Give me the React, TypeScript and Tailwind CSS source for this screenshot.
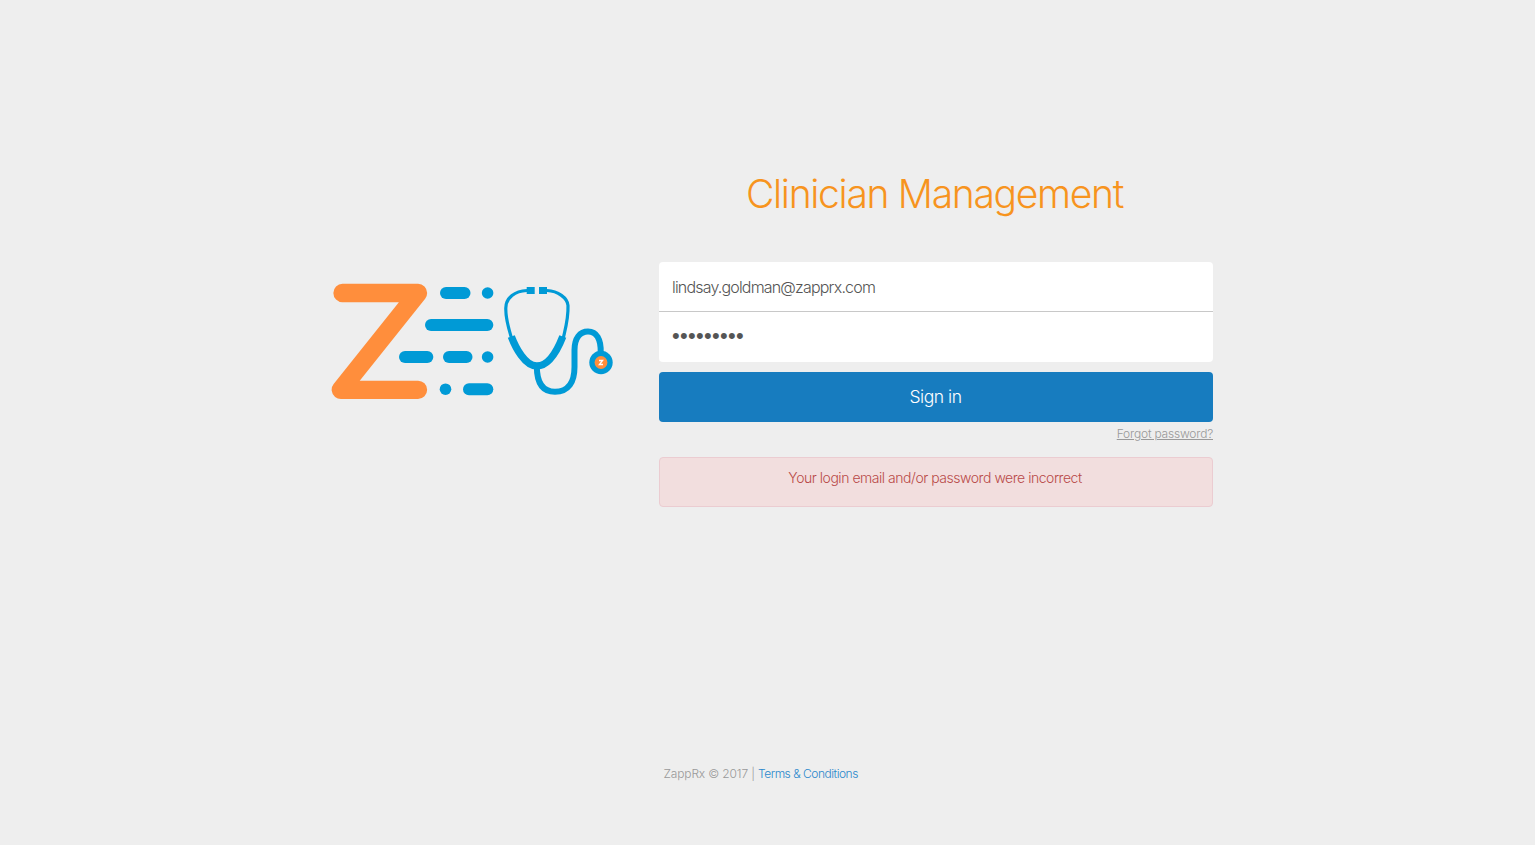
function Logo() {
  return (
    <svg className="block h-[120px] w-[284px]" viewBox="330 282 284 120" fill="none" role="img" aria-label="ZappRx">
      <path d="M342.5 293H418L340.8 389.8H418" stroke="#ff8e3c" strokeWidth="18.3" strokeLinecap="round" strokeLinejoin="round" />
      <g fill="#009ad6">
        <rect x="440" y="287" width="30.5" height="12" rx="6" />
        <circle cx="487.6" cy="293" r="5.8" />
        <rect x="425" y="319" width="68.3" height="12" rx="6" />
        <rect x="399" y="351" width="34.3" height="12" rx="6" />
        <rect x="443" y="351" width="29.5" height="12" rx="6" />
        <circle cx="487.6" cy="357" r="5.8" />
        <circle cx="445.5" cy="389.2" r="5.8" />
        <rect x="463" y="383.2" width="30.3" height="12" rx="6" />
        <rect x="526.7" y="287" width="8" height="7" />
        <rect x="539" y="287" width="8" height="7" />
      </g>
      <g stroke="#009ad6">
        <path d="M527 290.5C515 291 506 297.5 505.8 308C505.5 319 508.5 328 511.5 338" strokeWidth="3.2" />
        <path d="M547 290.5C558 291 567.5 298 568 305.5C568.5 318 565.8 327 563.3 338" strokeWidth="3.2" />
        <path d="M511.3 336.5C515.5 347.5 525 366 536.8 366C549 366 557.5 350 562.8 336.5" strokeWidth="7.4" />
        <path d="M536.8 366C536.8 382 542 391.8 555 391.8C568.5 391.8 574.5 382 574.5 367V350C574.5 338 580 331.5 588 331.5C596.5 331.5 601.2 339 600.7 353" strokeWidth="6" />
      </g>
      <circle cx="601" cy="362.5" r="11.7" fill="#009ad6" />
      <circle cx="601" cy="362.5" r="6.4" fill="#ff8e3c" />
      <path d="M599 360.5H602.6L599.4 364.5H603" stroke="#fff" strokeWidth="1.3" />
    </svg>
  );
}

export default function App() {
  return (
    <main className="flex h-[845px] justify-center overflow-hidden bg-[#eeeeee] font-['Inter',sans-serif] font-light">
      <div className="flex w-[1213px] pl-[169px]">
        <div className="w-[329px] shrink-0 pt-[282px]">
          <Logo />
        </div>
        <div className="flex w-[554px] shrink-0 flex-col">
          <h1 className="mt-[164px] h-[98px] whitespace-nowrap pr-[3px] text-center text-[39px] font-light leading-[60px] tracking-[-1.3px] text-[#f7941e]">
            Clinician Management
          </h1>
          <form className="flex flex-col" onSubmit={(e) => e.preventDefault()}>
            <div className="flex h-[100px] flex-col overflow-hidden rounded-[4px] bg-white">
              <input
                type="email"
                aria-label="Email"
                defaultValue="lindsay.goldman@zapprx.com"
                className="h-[50px] border-b border-[#c8c8c8] px-[13px] text-[16px] tracking-[-0.82px] text-[#555555] outline-none"
              />
              <input
                type="password"
                aria-label="Password"
                defaultValue="password1"
                className="h-[50px] px-[13px] pb-[2px] font-['Liberation_Sans',sans-serif] text-[22px] tracking-[0.3px] text-[#555555] outline-none"
              />
            </div>
            <button type="submit" className="mt-[10px] h-[50px] rounded-[4px] bg-[#177cbf] pr-[1px] text-[17.5px] tracking-[-0.45px] text-white">
              Sign in
            </button>
            <a href="#forgot" className="mt-[4px] h-[16px] self-end text-[12px] leading-[16px] tracking-[-0.2px] text-[#999999] underline">
              Forgot password?
            </a>
          </form>
          <div role="alert" className="mt-[15px] h-[50px] rounded-[4px] border border-[#ebccd1] bg-[#f2dede] pr-[2px] pt-[10px] text-center text-[14px] leading-[20px] tracking-[-0.47px] text-[#b94a48]">
            Your login email and/or password were incorrect
          </div>
          <footer className="mt-[258px] whitespace-nowrap pl-[4.5px] text-[12px] leading-[18px] tracking-[-0.15px] text-[#999999]">
            ZappRx © 2017 | <a href="#terms" className="tracking-[-0.49px] text-[#2a88cc]">Terms &amp; Conditions</a>
          </footer>
        </div>
      </div>
    </main>
  );
}
